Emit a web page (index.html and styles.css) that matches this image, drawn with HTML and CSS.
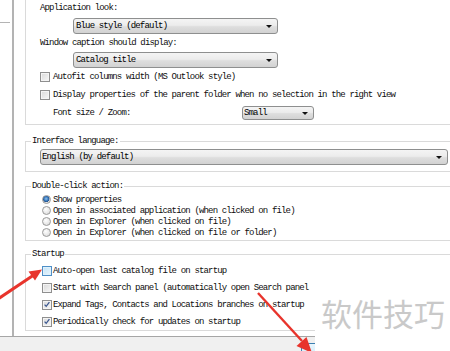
FILE: index.html
```html
<!DOCTYPE html>
<html>
<head>
<meta charset="utf-8">
<link rel="stylesheet" href="styles.css">
</head>
<body>
<div class="screen">
  <div class="main">
    <div class="side"><div class="side-line"></div></div>
    <div class="panel">
      <div class="group g1">
        <div class="lbl">Application look:</div>
        <div class="combo c1"><span>Blue style (default)</span><i class="arrow"></i></div>
        <div class="lbl l2">Window caption should display:</div>
        <div class="combo c1 c1b"><span>Catalog title</span><i class="arrow"></i></div>
        <div class="chk r1"><span class="cb"></span>Autofit columns width (MS Outlook style)</div>
        <div class="chk r2"><span class="cb"></span>Display properties of the parent folder when no selection in the right view</div>
        <div class="fontrow"><span class="fl">Font size / Zoom:</span><div class="combo small"><span>Small</span><i class="arrow"></i></div></div>
      </div>

      <fieldset class="fs lang">
        <legend>Interface language:</legend>
        <div class="combo wide"><span>English (by default)</span><i class="arrow"></i></div>
      </fieldset>

      <fieldset class="fs dbl">
        <legend>Double-click action:</legend>
        <div class="opt"><span class="rd on"></span>Show properties</div>
        <div class="opt"><span class="rd"></span>Open in associated application (when clicked on file)</div>
        <div class="opt"><span class="rd"></span>Open in Explorer  (when clicked on file)</div>
        <div class="opt"><span class="rd"></span>Open in Explorer  (when clicked on file or folder)</div>
      </fieldset>

      <fieldset class="fs start">
        <legend>Startup</legend>
        <div class="srow"><span class="cb hover"></span><span class="st">Auto-open last catalog file on startup</span></div>
        <div class="srow"><span class="cb"></span><span class="st">Start with Search panel (automatically open Search panel</span></div>
        <div class="srow"><span class="cb"><svg viewBox="0 0 9 9" width="9" height="9"><path d="M1.8 4.6 L3.6 6.6 L7.2 1.8" fill="none" stroke="#3a568f" stroke-width="1.4"/></svg></span><span class="st">Expand Tags, Contacts and Locations branches on startup</span></div>
        <div class="srow"><span class="cb"><svg viewBox="0 0 9 9" width="9" height="9"><path d="M1.8 4.6 L3.6 6.6 L7.2 1.8" fill="none" stroke="#3a568f" stroke-width="1.4"/></svg></span><span class="st">Periodically check for updates on startup</span></div>
      </fieldset>
    </div>
  </div>
  <div class="bar"><div class="btn"></div></div>

  <div class="watermark">软件技巧</div>

  <svg class="arrows" width="450" height="351" viewBox="0 0 450 351">
    <line x1="-2" y1="299" x2="33" y2="275.5" stroke="#e8342c" stroke-width="3"/>
    <polygon points="42,269.5 35,280.5 28.5,271.5" fill="#e8342c"/>
    <line x1="258" y1="293" x2="302" y2="341" stroke="#e8342c" stroke-width="2.4"/>
    <polygon points="312,353 306.5,337 296.5,346" fill="#e8342c"/>
  </svg>
</div>
</body>
</html>
```

FILE: styles.css
```css
* { box-sizing: border-box; }
html, body { margin: 0; padding: 0; }
body {
  width: 450px;
  height: 351px;
  overflow: hidden;
  background: #ffffff;
  font: 9px/12px "Liberation Mono", monospace;
  letter-spacing: -0.84px;
  color: #0e0e0e;
}
.screen {
  position: relative;
  width: 450px;
  height: 351px;
  display: flex;
  flex-direction: column;
}
.main {
  height: 340px;
  display: flex;
}
.side {
  width: 14px;
  flex: none;
  border-right: 2px solid #b3b3b3;
  padding-top: 22px;
  background: #fff;
}
.side-line {
  width: 10px;
  height: 1px;
  background: #b4b4b4;
}
.panel {
  flex: 1;
  overflow: hidden;
  background: #fff;
}

/* top group (top edge off-screen) */
.group {
  width: 438px;
  margin-left: 11px;
  border: 1px solid #dadada;
  border-top: 0;
  padding: 0 0 4px 14px;
}
.lbl { height: 16px; line-height: 16px; }
.l2 { margin-top: 1px; }

.combo {
  display: flex;
  align-items: center;
  height: 16px;
  border: 1px solid #8e8f8f;
  border-radius: 3px;
  background: linear-gradient(#f4f4f4, #ececec 45%, #dedede 55%, #d2d2d2);
  padding-left: 2px;
  line-height: 14px;
  color: #000;
}
.combo span { flex: 1; white-space: nowrap; }
.arrow {
  width: 0;
  height: 0;
  border-left: 3px solid transparent;
  border-right: 3px solid transparent;
  border-top: 3px solid #111;
  margin-right: 5px;
}
.c1 { width: 205px; margin-left: 33px; margin-top: 2px; }
.c1b { margin-top: 1px; }

.chk, .srow, .opt {
  display: flex;
  align-items: center;
  white-space: nowrap;
}
.chk { height: 14px; }
.r1 { margin-top: 2px; }
.r2 { margin-top: 4px; }

.cb {
  width: 10px;
  height: 10px;
  flex: none;
  margin-right: 3px;
  border: 1px solid #8f8f8f;
  background: linear-gradient(135deg, #d9d9d9, #f7f7f7);
  box-shadow: inset 0 0 0 1px #f4f4f4;
  display: flex;
  align-items: center;
  justify-content: center;
}
.cb svg { display: block; }
.cb.hover {
  border-color: #4f8fc7;
  background: linear-gradient(135deg, #c3e3f7, #e9f6fd);
  box-shadow: inset 0 0 0 1px #dff1fc;
}

.fontrow {
  display: flex;
  align-items: center;
  height: 14px;
  margin-top: 4px;
}
.fl { width: 202px; padding-left: 13px; white-space: nowrap; }
.small { width: 72px; height: 14px; padding-left: 1px; }

/* fieldsets */
.fs {
  width: 438px;
  margin: 0 0 0 11px;
  padding: 0;
  border: 1px solid #dadada;
  min-width: 0;
}
.fs legend {
  margin-left: 5px;
  padding: 0 1px;
  height: 12px;
  line-height: 12px;
}
.lang { margin-top: 10px; padding: 2px 0 6px 0; }
.wide { width: 408px; padding-left: 1px; margin-left: 14px; }

.dbl { margin-top: 8px; padding: 2px 0 2px 0; }
.opt { height: 11px; padding-left: 16px; }
.rd {
  width: 9px;
  height: 9px;
  flex: none;
  margin-right: 2px;
  border-radius: 50%;
  border: 1px solid #9a9a9a;
  background: radial-gradient(circle at 40% 35%, #ffffff, #d6d6d6);
}
.rd.on {
  background: radial-gradient(circle at 45% 40%, #8fc0ea 0, #3a7cc1 2px, #24558f 3px, #e3e3e3 3.6px, #f2f2f2);
}

.start { margin-top: 7px; padding: 2px 0 0 0; }
.srow { height: 17px; padding-left: 16px; }
.start .cb { margin-right: 1px; }
.st { white-space: nowrap; }

.bar {
  flex: 1;
  border-top: 1px solid #a6a6a6;
  background: #f0f0f0;
  padding: 6px 0 0 301px;
}
.btn {
  width: 40px;
  height: 8px;
  border: 1px solid #3c7fb1;
  border-bottom: 0;
  border-radius: 3px 3px 0 0;
  background: linear-gradient(#eaf6fd, #d9f0fc);
}

.watermark {
  position: absolute;
  left: 315px;
  top: 270px;
  width: 135px;
  height: 81px;
  background: #fff;
  padding: 27px 0 0 6px;
  font: 31px/31px "Noto Sans CJK SC", sans-serif;
  letter-spacing: 0;
  color: #c9c9c9;
  white-space: nowrap;
}
.arrows {
  position: absolute;
  left: 0;
  top: 0;
  pointer-events: none;
}
```
